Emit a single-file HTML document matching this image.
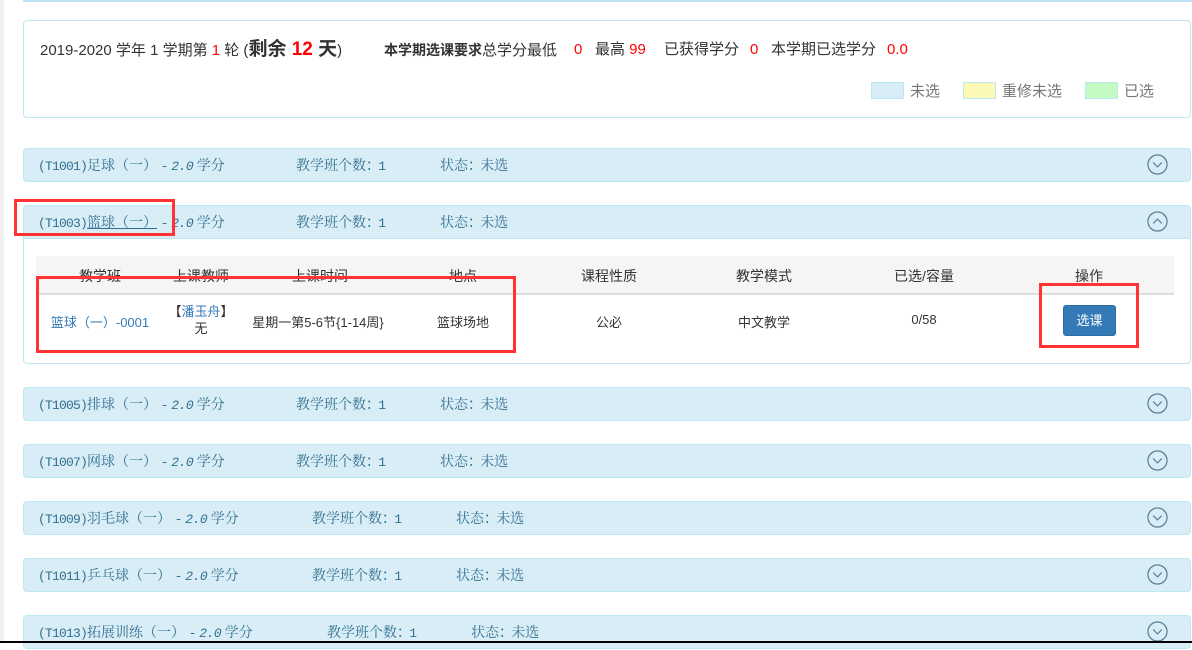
<!DOCTYPE html>
<html><head><meta charset="utf-8"><style>
*{margin:0;padding:0;box-sizing:border-box}
body{width:1192px;height:643px;overflow:hidden;background:#fff;position:relative;font-family:"Liberation Sans","Noto Sans CJK SC",sans-serif;}
.strip{position:absolute;left:0;top:0;width:4px;height:643px;background:#f0f0f0}
.topline{position:absolute;left:23px;top:0;width:1169px;height:2px;background:#bce0f5}
.info{position:absolute;left:23px;top:20px;width:1168px;height:98px;border:1px solid #bce8f1;border-radius:4px;background:#fff}
.t{position:absolute;top:19px;font-size:15px;color:#333;white-space:nowrap;line-height:20px}
.r{color:#f00}
.legend{position:absolute;top:59px;font-size:15px;color:#777;white-space:nowrap}
.sw{display:inline-block;width:33px;height:17px;vertical-align:-3px;margin-right:6px;border:1px solid #bce8f1}
.ph{position:absolute;left:23px;width:1168px;height:34px;background:#d9edf7;border:1px solid #bce8f1;border-radius:4px;color:#31708f;font-family:"Noto Serif CJK SC","WenQuanYi Zen Hei",serif;font-size:14px;white-space:nowrap}
.ph span.grp{position:absolute;top:0;line-height:32px}
.m{font-family:"Liberation Mono",monospace;font-size:13px;letter-spacing:-0.8px}
.ph i{font-family:"Liberation Mono",monospace;font-size:13px;letter-spacing:-0.5px;font-style:italic}
.chev{position:absolute;right:22px;top:5px;width:21px;height:21px}
.body{position:absolute;left:23px;top:238px;width:1168px;height:126px;border:1px solid #bce8f1;border-top:none;border-radius:0 0 4px 4px}
.thead{position:absolute;left:36px;top:256px;width:1138px;height:39px;background:#f5f5f5;border-bottom:2px solid #ddd}
.c{position:absolute;transform:translateX(-50%);font-size:13px;color:#333;white-space:nowrap;text-align:center}
.rb{position:absolute;border:3px solid #f33}
.btn{position:absolute;left:1063px;top:305px;width:53px;height:31px;background:#337ab7;border:1px solid #2e6da4;border-radius:3px;color:#fff;font-size:13px;text-align:center;line-height:29px}
</style></head><body>
<div class="strip"></div>
<div class="topline"></div>
<div class="info">
 <div class="t" style="left:16px">2019-2020 学年 1 学期第 <span class="r">1</span> 轮 (<b style="font-size:19px">剩余 <span class="r">12</span> 天</b>)</div>
 <div class="t" style="left:360px"><b style="font-size:14px">本学期选课要求</b>总学分最低</div>
 <div class="t r" style="left:550px">0</div>
 <div class="t" style="left:571px">最高 <span class="r">99</span></div>
 <div class="t" style="left:640px">已获得学分</div>
 <div class="t r" style="left:726px">0</div>
 <div class="t" style="left:747px">本学期已选学分</div>
 <div class="t r" style="left:863px">0.0</div>
 <div class="legend" style="left:847px"><span class="sw" style="background:#d9edf7"></span>未选</div>
 <div class="legend" style="left:939px"><span class="sw" style="background:#fcf8b5"></span>重修未选</div>
 <div class="legend" style="left:1061px"><span class="sw" style="background:#c3fbc3"></span>已选</div>
</div>

<div class="ph" style="top:148px"><span class="grp" style="left:14px"><span class="m">(T1001)</span>足球（一） <span class="m">-</span> <i>2.0</i> 学分</span><span class="grp" style="left:272px">教学班个数<span class="m">：1</span></span><span class="grp" style="left:416px">状态<span class="m">：</span>未选</span><svg class="chev" viewBox="0 0 22 22"><circle cx="11" cy="11" r="10" fill="none" stroke="#5a7f95" stroke-width="1.3"/><path d="M6.5 9l4.5 4.5 4.5-4.5" fill="none" stroke="#5a7f95" stroke-width="1.3"/></svg></div>
<div class="ph" style="top:205px;border-radius:4px 4px 0 0"><span class="grp" style="left:14px"><span class="m">(T1003)</span><u>篮球（一）</u> <span class="m">-</span> <i>2.0</i> 学分</span><span class="grp" style="left:272px">教学班个数<span class="m">：1</span></span><span class="grp" style="left:416px">状态<span class="m">：</span>未选</span><svg class="chev" viewBox="0 0 22 22"><circle cx="11" cy="11" r="10" fill="none" stroke="#5a7f95" stroke-width="1.3"/><path d="M6.5 13l4.5-4.5 4.5 4.5" fill="none" stroke="#5a7f95" stroke-width="1.3"/></svg></div>
<div class="body"></div>
<div class="thead"></div>
<div class="c" style="left:100px;top:266px;font-size:14px">教学班</div>
<div class="c" style="left:201px;top:266px;font-size:14px">上课教师</div>
<div class="c" style="left:320px;top:266px;font-size:14px">上课时间</div>
<div class="c" style="left:463px;top:266px;font-size:14px">地点</div>
<div class="c" style="left:609px;top:266px;font-size:14px">课程性质</div>
<div class="c" style="left:764px;top:266px;font-size:14px">教学模式</div>
<div class="c" style="left:924px;top:266px;font-size:14px">已选/容量</div>
<div class="c" style="left:1089px;top:266px;font-size:14px">操作</div>
<div class="c" style="left:100px;top:312px;color:#337ab7">篮球（一）-0001</div>
<div class="c" style="left:201px;top:303px;line-height:17px">【<span style="color:#337ab7">潘玉舟</span>】<br>无</div>
<div class="c" style="left:318px;top:312px">星期一第5-6节{1-14周}</div>
<div class="c" style="left:463px;top:312px">篮球场地</div>
<div class="c" style="left:609px;top:312px">公必</div>
<div class="c" style="left:764px;top:312px">中文教学</div>
<div class="c" style="left:924px;top:312px">0/58</div>
<div class="btn">选课</div>

<div class="ph" style="top:387px"><span class="grp" style="left:14px"><span class="m">(T1005)</span>排球（一） <span class="m">-</span> <i>2.0</i> 学分</span><span class="grp" style="left:272px">教学班个数<span class="m">：1</span></span><span class="grp" style="left:416px">状态<span class="m">：</span>未选</span><svg class="chev" viewBox="0 0 22 22"><circle cx="11" cy="11" r="10" fill="none" stroke="#5a7f95" stroke-width="1.3"/><path d="M6.5 9l4.5 4.5 4.5-4.5" fill="none" stroke="#5a7f95" stroke-width="1.3"/></svg></div>
<div class="ph" style="top:444px"><span class="grp" style="left:14px"><span class="m">(T1007)</span>网球（一） <span class="m">-</span> <i>2.0</i> 学分</span><span class="grp" style="left:272px">教学班个数<span class="m">：1</span></span><span class="grp" style="left:416px">状态<span class="m">：</span>未选</span><svg class="chev" viewBox="0 0 22 22"><circle cx="11" cy="11" r="10" fill="none" stroke="#5a7f95" stroke-width="1.3"/><path d="M6.5 9l4.5 4.5 4.5-4.5" fill="none" stroke="#5a7f95" stroke-width="1.3"/></svg></div>
<div class="ph" style="top:501px"><span class="grp" style="left:14px"><span class="m">(T1009)</span>羽毛球（一） <span class="m">-</span> <i>2.0</i> 学分</span><span class="grp" style="left:288px">教学班个数<span class="m">：1</span></span><span class="grp" style="left:432px">状态<span class="m">：</span>未选</span><svg class="chev" viewBox="0 0 22 22"><circle cx="11" cy="11" r="10" fill="none" stroke="#5a7f95" stroke-width="1.3"/><path d="M6.5 9l4.5 4.5 4.5-4.5" fill="none" stroke="#5a7f95" stroke-width="1.3"/></svg></div>
<div class="ph" style="top:558px"><span class="grp" style="left:14px"><span class="m">(T1011)</span>乒乓球（一） <span class="m">-</span> <i>2.0</i> 学分</span><span class="grp" style="left:288px">教学班个数<span class="m">：1</span></span><span class="grp" style="left:432px">状态<span class="m">：</span>未选</span><svg class="chev" viewBox="0 0 22 22"><circle cx="11" cy="11" r="10" fill="none" stroke="#5a7f95" stroke-width="1.3"/><path d="M6.5 9l4.5 4.5 4.5-4.5" fill="none" stroke="#5a7f95" stroke-width="1.3"/></svg></div>
<div class="ph" style="top:615px"><span class="grp" style="left:14px"><span class="m">(T1013)</span>拓展训练（一） <span class="m">-</span> <i>2.0</i> 学分</span><span class="grp" style="left:303px">教学班个数<span class="m">：1</span></span><span class="grp" style="left:447px">状态<span class="m">：</span>未选</span><svg class="chev" viewBox="0 0 22 22"><circle cx="11" cy="11" r="10" fill="none" stroke="#5a7f95" stroke-width="1.3"/><path d="M6.5 9l4.5 4.5 4.5-4.5" fill="none" stroke="#5a7f95" stroke-width="1.3"/></svg></div>

<div class="rb" style="left:14px;top:199px;width:161px;height:37px"></div>
<div class="rb" style="left:36px;top:276px;width:480px;height:77px"></div>
<div class="rb" style="left:1039px;top:283px;width:100px;height:65px"></div>
<div style="position:absolute;left:0;top:641px;width:1192px;height:2px;background:#000"></div>
</body></html>
